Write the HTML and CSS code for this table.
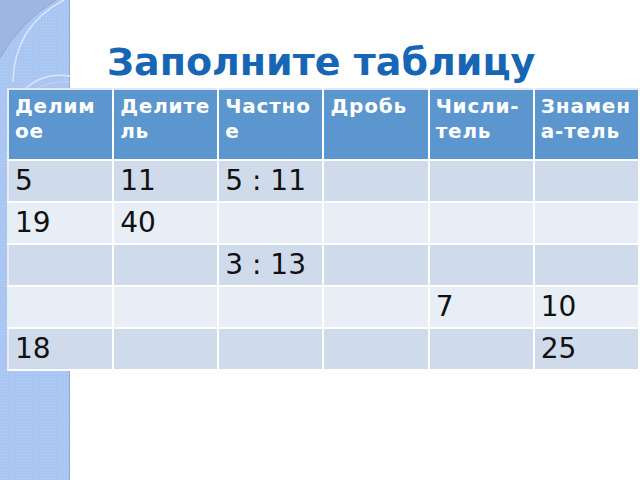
FILE: index.html
```html
<!DOCTYPE html>
<html lang="ru">
<head>
<meta charset="utf-8">
<title>Заполните таблицу</title>
<link rel="stylesheet" href="styles.css">
</head>
<body>
<div class="strip" aria-hidden="true">
  <svg class="strip-art" width="70" height="120" viewBox="0 0 70 120">
    <path d="M0,0 H56 Q20,22 0,58 Z" fill="#9db6e2"/>
    <path d="M0,58 Q20,22 56,0" fill="none" stroke="#8ea7d3" stroke-width="1"/>
    <path d="M64,0 Q14,26 13,82" fill="none" stroke="#dbe6fa" stroke-width="1.5"/>
    <path d="M26,88 Q44,72 70,76" fill="none" stroke="#dbe6fa" stroke-width="1.5"/>
    <path d="M32,92 Q48,80 70,82" fill="none" stroke="#c3d5f6" stroke-width="1"/>
  </svg>
</div>
<main class="page">
  <h1 class="title">Заполните таблицу</h1>
  <table class="grid">
    <thead>
      <tr class="head">
        <th>Делим<br>ое</th>
        <th>Делите<br>ль</th>
        <th>Частно<br>е</th>
        <th>Дробь</th>
        <th>Числи-<br>тель</th>
        <th>Знамен<br>а-тель</th>
      </tr>
    </thead>
    <tbody>
      <tr class="dark"><td>5</td><td>11</td><td>5 : 11</td><td></td><td></td><td></td></tr>
      <tr class="light"><td>19</td><td>40</td><td></td><td></td><td></td><td></td></tr>
      <tr class="dark"><td></td><td></td><td>3 : 13</td><td></td><td></td><td></td></tr>
      <tr class="light"><td></td><td></td><td></td><td></td><td>7</td><td>10</td></tr>
      <tr class="dark"><td>18</td><td></td><td></td><td></td><td></td><td>25</td></tr>
    </tbody>
  </table>
</main>
</body>
</html>
```
FILE: styles.css
```css
html, body {
  margin: 0;
  padding: 0;
  background: #ffffff;
  width: 640px;
  height: 480px;
  overflow: hidden;
}

body {
  position: relative;
  font-family: "DejaVu Sans", "Liberation Sans", sans-serif;
}

.strip {
  position: absolute;
  left: 0;
  top: 0;
  width: 69px;
  height: 480px;
  background-color: #a9c5f2;
  background-image: radial-gradient(circle, rgba(255,255,255,0.18) 0.6px, transparent 0.8px);
  background-size: 3px 3px;
  border-right: 1px solid #8fa8d6;
}

.strip-art {
  display: block;
}

.page {
  position: relative;
  padding-top: 40px;
}

.title {
  margin: 0 0 4px 107px;
  height: 44px;
  font-size: 38px;
  line-height: 44px;
  font-weight: bold;
  color: #1766b5;
  white-space: nowrap;
}

.grid {
  margin-left: 7px;
  width: 633px;
  table-layout: fixed;
  border-collapse: collapse;
}

.grid th,
.grid td {
  border: 2px solid #ffffff;
  padding: 0 6px;
  vertical-align: top;
  text-align: left;
  overflow: hidden;
  white-space: nowrap;
}

.grid th {
  height: 65px;
  padding-top: 4px;
  background: #5b96cf;
  color: #ffffff;
  font-size: 20px;
  line-height: 25px;
  font-weight: bold;
  letter-spacing: 0.8px;
}

.grid td {
  height: 36px;
  padding-top: 4px;
  font-size: 28px;
  line-height: 32px;
  color: #111111;
}

.grid tr.dark td {
  background: #cfdbea;
}

.grid tr.light td {
  background: #e8eef6;
}

.grid tr:first-child td,
.grid tr:first-child th {
  border-top-color: #dfe8f4;
}

.grid td:first-child,
.grid th:first-child {
  border-left-color: #e6edf8;
}
```
